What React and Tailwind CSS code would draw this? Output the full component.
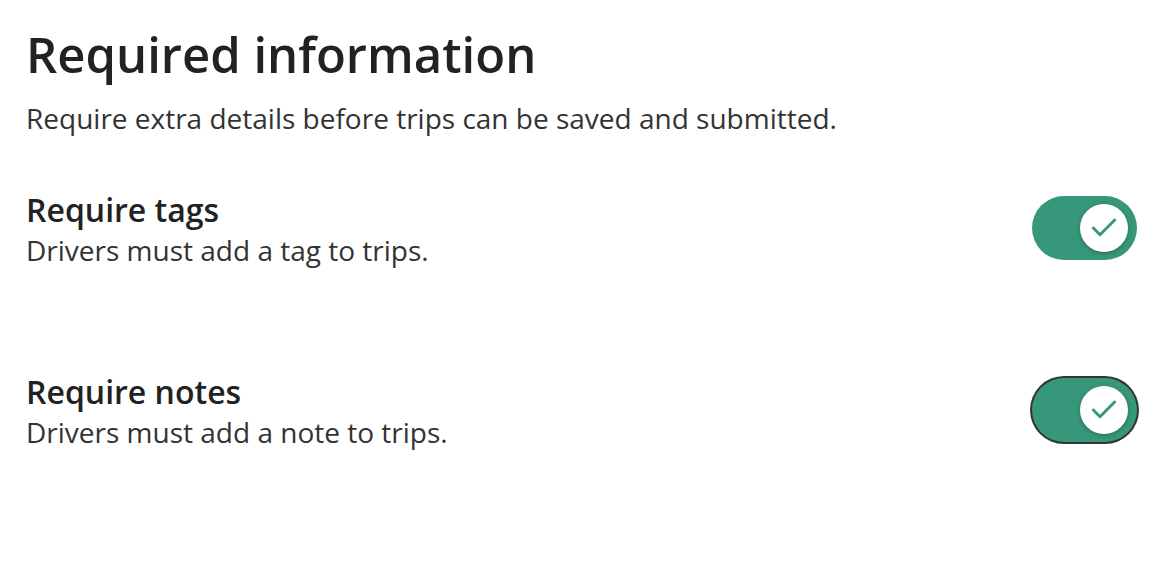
import React from "react";

function Toggle({ focused }) {
  return (
    <div
      className={
        "mt-[7px] flex h-[64px] w-[105px] shrink-0 items-center justify-end rounded-full bg-[#37977a] pr-[9px] " +
        (focused ? "ring-2 ring-[#333333]" : "")
      }
    >
      <div className="flex h-[48px] w-[48px] items-center justify-center rounded-full bg-white shadow-[0_1px_4px_rgba(0,0,0,0.3)]">
        <svg width="32" height="32" viewBox="0 0 24 24" fill="none" stroke="#37977a" strokeWidth="2.2" strokeLinecap="round" strokeLinejoin="round">
          <path d="M20 6 9 17l-5-5" />
        </svg>
      </div>
    </div>
  );
}

function Row({ title, desc, focused }) {
  return (
    <div className="flex items-start justify-between">
      <div className="flex flex-col">
        <div className="text-[32px] font-semibold leading-[42px] text-[#222222]">{title}</div>
        <div className="text-[28px] leading-[38px] text-[#333333]">{desc}</div>
      </div>
      <Toggle focused={focused} />
    </div>
  );
}

export default function App() {
  return (
    <div
      className="h-[564px] w-[1176px] bg-white pl-[26px] pr-[39px] pt-[24px]"
      style={{ fontFamily: '"Open Sans", sans-serif' }}
    >
      <h1 className="text-[49px] font-semibold leading-[60px] text-[#222222]">Required information</h1>
      <p className="mt-[15px] text-[28px] leading-[38px] text-[#333333]">
        Require extra details before trips can be saved and submitted.
      </p>
      <div className="mt-[52px] flex flex-col gap-[102px]">
        <Row title="Require tags" desc="Drivers must add a tag to trips." />
        <Row title="Require notes" desc="Drivers must add a note to trips." focused />
      </div>
    </div>
  );
}
